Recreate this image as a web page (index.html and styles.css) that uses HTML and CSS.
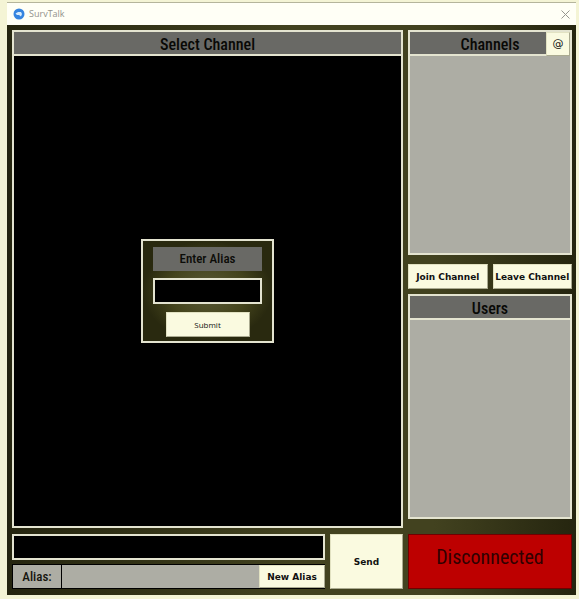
FILE: index.html
```html
<!DOCTYPE html>
<html lang="en">
<head>
<meta charset="utf-8">
<title>SurvTalk</title>
<link rel="stylesheet" href="styles.css">
</head>
<body>
<div class="window">
  <header class="titlebar">
    <svg class="logo" viewBox="0 0 12 12" aria-hidden="true">
      <circle cx="6" cy="6" r="5.5" fill="#3584e0"/>
      <path d="M2.500 5.500 5 4l3 0 1 2-1 2.500-2-1.500-2 0z" fill="#d5eafc"/>
    </svg>
    <span class="app-name">SurvTalk</span>
    <button class="close" aria-label="Close">
      <svg viewBox="0 0 9 9" aria-hidden="true"><path d="M.5.5l8 8M8.500.5l-8 8" stroke="#96968f" fill="none"/></svg>
    </button>
  </header>
  <main class="workspace">
    <div class="chat">
      <section class="panel conversation">
        <h1 class="panel-title">Select Channel</h1>
        <div class="messages">
          <form class="alias-dialog">
            <label class="dialog-title" for="new-alias">Enter Alias</label>
            <input class="field" id="new-alias" type="text">
            <button class="button submit" type="button">Submit</button>
          </form>
        </div>
      </section>
      <div class="composer">
        <div class="composer-fields">
          <input class="field" type="text" aria-label="Message">
          <div class="alias-row">
            <span class="alias-label">Alias:</span>
            <span class="alias-value"></span>
            <button class="button" type="button">New Alias</button>
          </div>
        </div>
        <button class="button send" type="button">Send</button>
      </div>
    </div>
    <aside class="sidebar">
      <section class="panel list-panel">
        <div class="list-head">
          <h2 class="panel-title">Channels</h2>
          <button class="button mention" type="button">@</button>
        </div>
        <div class="list"></div>
      </section>
      <div class="channel-actions">
        <button class="button" type="button">Join Channel</button>
        <button class="button" type="button">Leave Channel</button>
      </div>
      <section class="panel list-panel">
        <h2 class="panel-title">Users</h2>
        <div class="list"></div>
      </section>
      <div class="status" role="status">Disconnected</div>
    </aside>
  </main>
</div>
</body>
</html>
```
FILE: styles.css
```css
* { box-sizing: border-box; }

:root {
  --line: #e4e4d0;
  --head: #696965;
  --list: #adada4;
  --cream: #fafae0;
  --narrow: "Agency FB", "Roboto Condensed", Roboto, sans-serif;
}

body {
  margin: 0;
  height: 100vh;
  padding: 2px 3px 4px 7px;
  background: #f4f4d5;
  font-family: "DejaVu Sans", sans-serif;
}

h1, h2 { margin: 0; }

button, input { font: inherit; margin: 0; border-radius: 0; }

.window {
  display: flex;
  flex-direction: column;
  height: 100%;
}

.titlebar {
  display: flex;
  align-items: center;
  gap: 4px;
  height: 23px;
  padding: 0 6px;
  background: #fffff6;
  border-top: 1px solid #b5b59c;
}

.logo { width: 12px; height: 12px; }

.app-name {
  flex: 1;
  color: #92928c;
  font: 9px/12px "Open Sans", sans-serif;
}

.close {
  display: flex;
  padding: 0;
  border: 0;
  background: none;
}

.close svg { width: 9px; height: 9px; }

.workspace {
  flex: 1;
  min-height: 0;
  display: grid;
  grid-template-columns: 391fr 164fr;
  gap: 5px;
  padding: 5px 4px 6px 5px;
  background: linear-gradient(90deg, #25250f, #42421f 50%, #42421f 75%, #25250f);
}

.chat, .sidebar {
  display: flex;
  flex-direction: column;
  min-width: 0;
}

.chat { gap: 6px; }

.panel {
  display: flex;
  flex-direction: column;
  border: 2px solid var(--line);
}

.conversation { flex: 1; }

.panel-title {
  height: 24px;
  background: var(--head);
  border-bottom: 2px solid var(--line);
  color: #080805;
  font: 500 16px/26px var(--narrow);
  text-align: center;
}

.messages {
  flex: 1;
  display: grid;
  place-items: center;
  background: #000;
}

.alias-dialog {
  display: flex;
  flex-direction: column;
  align-items: stretch;
  width: 133px;
  padding: 6px 10px 4px;
  border: 2px solid var(--line);
  background: radial-gradient(closest-side, #5c5c38, #44441c 60%, #29290f);
}

.dialog-title {
  height: 24px;
  margin-bottom: 7px;
  background: var(--head);
  color: #0c0c08;
  font: 500 13px/23px var(--narrow);
  text-align: center;
}

.field {
  width: 100%;
  height: 26px;
  padding: 2px 4px;
  border: 2px solid var(--line);
  background: #000;
  color: #fff;
  font-size: 11px;
}

.button {
  padding: 0;
  border: 1px solid #e2e2c2;
  border-right-color: #aaaa90;
  border-bottom-color: #aaaa90;
  background: var(--cream);
  color: #111;
  font: bold 9px/12px "DejaVu Sans", sans-serif;
  white-space: nowrap;
}

.submit {
  align-self: center;
  width: 84px;
  height: 25px;
  margin-top: 8px;
  font: 8px/12px "Open Sans", sans-serif;
}

.composer {
  display: flex;
  gap: 5px;
  height: 55px;
}

.composer-fields {
  flex: 1;
  display: flex;
  flex-direction: column;
  justify-content: space-between;
}

.send { width: 73px; }

.alias-row {
  display: grid;
  grid-template-columns: 49px 1fr 66px;
  height: 25px;
  border: 1px solid #000;
  border-right: 0;
  background: var(--list);
}

.alias-label {
  border-right: 1px solid #000;
  color: #15150e;
  font: 500 13px/23px var(--narrow);
  text-align: center;
}

.list-panel { height: 225px; }

.list-head {
  display: grid;
  grid-template-columns: 1fr;
}

.list-head > * { grid-area: 1 / 1; }

.mention {
  justify-self: end;
  width: 24px;
  height: 24px;
  font-size: 11px;
  font-weight: normal;
}

.list {
  flex: 1;
  background: var(--list);
}

.channel-actions {
  display: grid;
  grid-template-columns: 1fr 1fr;
  gap: 5px;
  height: 25px;
  margin: 9px 0 5px;
}

.status {
  height: 55px;
  margin-top: auto;
  border: 1px solid #700000;
  background: #bd0000;
  color: #300000;
  font: 20px/44px var(--narrow);
  text-align: center;
}
```
